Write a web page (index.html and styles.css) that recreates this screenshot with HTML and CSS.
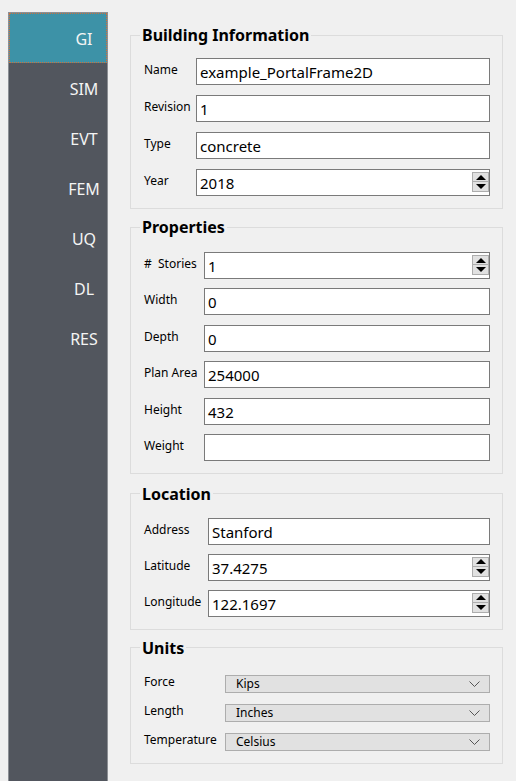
FILE: index.html
```html
<!DOCTYPE html>
<html>
<head>
<meta charset="utf-8">
<link rel="stylesheet" href="styles.css">
</head>
<body>
<div class="app">
  <nav class="sidebar">
    <div class="tab active">GI</div>
    <div class="tab">SIM</div>
    <div class="tab">EVT</div>
    <div class="tab">FEM</div>
    <div class="tab">UQ</div>
    <div class="tab">DL</div>
    <div class="tab">RES</div>
  </nav>
  <main class="content">
    <fieldset class="group g-bi">
      <legend>Building Information</legend>
      <div class="rows">
        <label class="lbl">Name</label><div class="field">example_PortalFrame2D</div>
        <label class="lbl">Revision</label><div class="field">1</div>
        <label class="lbl">Type</label><div class="field">concrete</div>
        <label class="lbl">Year</label><div class="field spin">2018<span class="spinbtns"><span class="sb up"></span><span class="sb down"></span></span></div>
      </div>
    </fieldset>
    <fieldset class="group g-props">
      <legend>Properties</legend>
      <div class="rows">
        <label class="lbl">#&nbsp; Stories</label><div class="field spin">1<span class="spinbtns"><span class="sb up"></span><span class="sb down"></span></span></div>
        <label class="lbl">Width</label><div class="field">0</div>
        <label class="lbl">Depth</label><div class="field">0</div>
        <label class="lbl">Plan Area</label><div class="field">254000</div>
        <label class="lbl">Height</label><div class="field">432</div>
        <label class="lbl">Weight</label><div class="field"></div>
      </div>
    </fieldset>
    <fieldset class="group g-loc">
      <legend>Location</legend>
      <div class="rows">
        <label class="lbl">Address</label><div class="field">Stanford</div>
        <label class="lbl">Latitude</label><div class="field spin">37.4275<span class="spinbtns"><span class="sb up"></span><span class="sb down"></span></span></div>
        <label class="lbl">Longitude</label><div class="field spin">122.1697<span class="spinbtns"><span class="sb up"></span><span class="sb down"></span></span></div>
      </div>
    </fieldset>
    <fieldset class="group g-units">
      <legend>Units</legend>
      <div class="rows">
        <label class="lbl">Force</label><div class="combo">Kips<svg class="chev" width="11" height="7" viewBox="0 0 11 7"><path d="M0.5 0.5 L5.5 5.5 L10.5 0.5" fill="none" stroke="#555" stroke-width="1"/></svg></div>
        <label class="lbl">Length</label><div class="combo">Inches<svg class="chev" width="11" height="7" viewBox="0 0 11 7"><path d="M0.5 0.5 L5.5 5.5 L10.5 0.5" fill="none" stroke="#555" stroke-width="1"/></svg></div>
        <label class="lbl">Temperature</label><div class="combo">Celsius<svg class="chev" width="11" height="7" viewBox="0 0 11 7"><path d="M0.5 0.5 L5.5 5.5 L10.5 0.5" fill="none" stroke="#555" stroke-width="1"/></svg></div>
      </div>
    </fieldset>
  </main>
</div>
</body>
</html>
```

FILE: styles.css
```css
html, body {
  margin: 0;
  padding: 0;
  background: #f0f0f0;
  font-family: "Noto Sans", "Open Sans", sans-serif;
  color: #000;
}
.app {
  display: flex;
  height: 781px;
  overflow: hidden;
}
.sidebar {
  margin: 12px 0 0 8px;
  width: 98px;
  flex: none;
  background: #52565e;
  border: 1px solid #8c8f94;
  border-bottom: none;
  display: flex;
  flex-direction: column;
}
.tab {
  height: 50px;
  box-sizing: border-box;
  display: flex;
  align-items: center;
  justify-content: center;
  padding-left: 52px;
  padding-top: 2px;
  color: #f4f4f4;
  font-size: 16px;
}
.tab.active {
  background: #3d92a7;
  outline: 1px dotted #d0703a;
  outline-offset: -1px;
}
.content {
  margin-left: 22px;
  width: 373px;
  padding-top: 25px;
  display: flex;
  flex-direction: column;
}
.group {
  margin: 0;
  padding: 0 12px 12px 13px;
  border: 1px solid #dcdcdc;
  min-width: 0;
}
.g-props { margin-top: 8px; }
.g-loc { margin-top: 10px; }
.g-units { margin-top: 8px; }
legend {
  font-weight: bold;
  font-size: 16px;
  line-height: 20px;
  padding: 0 2px;
  margin-left: -4px;
}
.rows {
  display: grid;
  align-items: center;
  margin-top: 13px;
}
.g-bi .rows { grid-template-columns: 52px 1fr; row-gap: 10px; }
.g-props .rows { grid-template-columns: 60px 1fr; row-gap: 9.4px; margin-top: 15px; }
.g-loc .rows { grid-template-columns: 64px 1fr; row-gap: 9px; margin-top: 14px; }
.g-units .rows { grid-template-columns: 81px 1fr; row-gap: 11px; margin-top: 17px; }
.lbl {
  font-size: 12px;
  line-height: 16px;
  align-self: center;
  margin-top: -3px;
}
.field {
  height: 27px;
  box-sizing: border-box;
  border: 1px solid #7a7a7a;
  background: #fff;
  font-size: 15px;
  line-height: 25px;
  padding: 1px 0 0 3px;
  position: relative;
  white-space: nowrap;
  overflow: hidden;
}
.spinbtns {
  position: absolute;
  right: 0;
  top: 2px;
  width: 17px;
  display: flex;
  flex-direction: column;
}
.sb {
  height: 10px;
  border: 1px solid #adadad;
  background: #e1e1e1;
  display: flex;
  align-items: center;
  justify-content: center;
  box-sizing: border-box;
  width: 17px;
}
.sb + .sb { height: 11px; margin-top: -1px; }
.sb::after {
  content: "";
  width: 0;
  height: 0;
  border-left: 5px solid transparent;
  border-right: 5px solid transparent;
}
.sb.up::after { border-bottom: 5px solid #000; }
.sb.down::after { border-top: 5px solid #000; }
.combo {
  height: 18px;
  box-sizing: border-box;
  border: 1px solid #adadad;
  background: #e1e1e1;
  font-size: 12px;
  line-height: 16px;
  padding: 1px 0 0 10px;
  display: flex;
  align-items: center;
  justify-content: space-between;
}
.chev {
  margin-right: 9px;
}
```
